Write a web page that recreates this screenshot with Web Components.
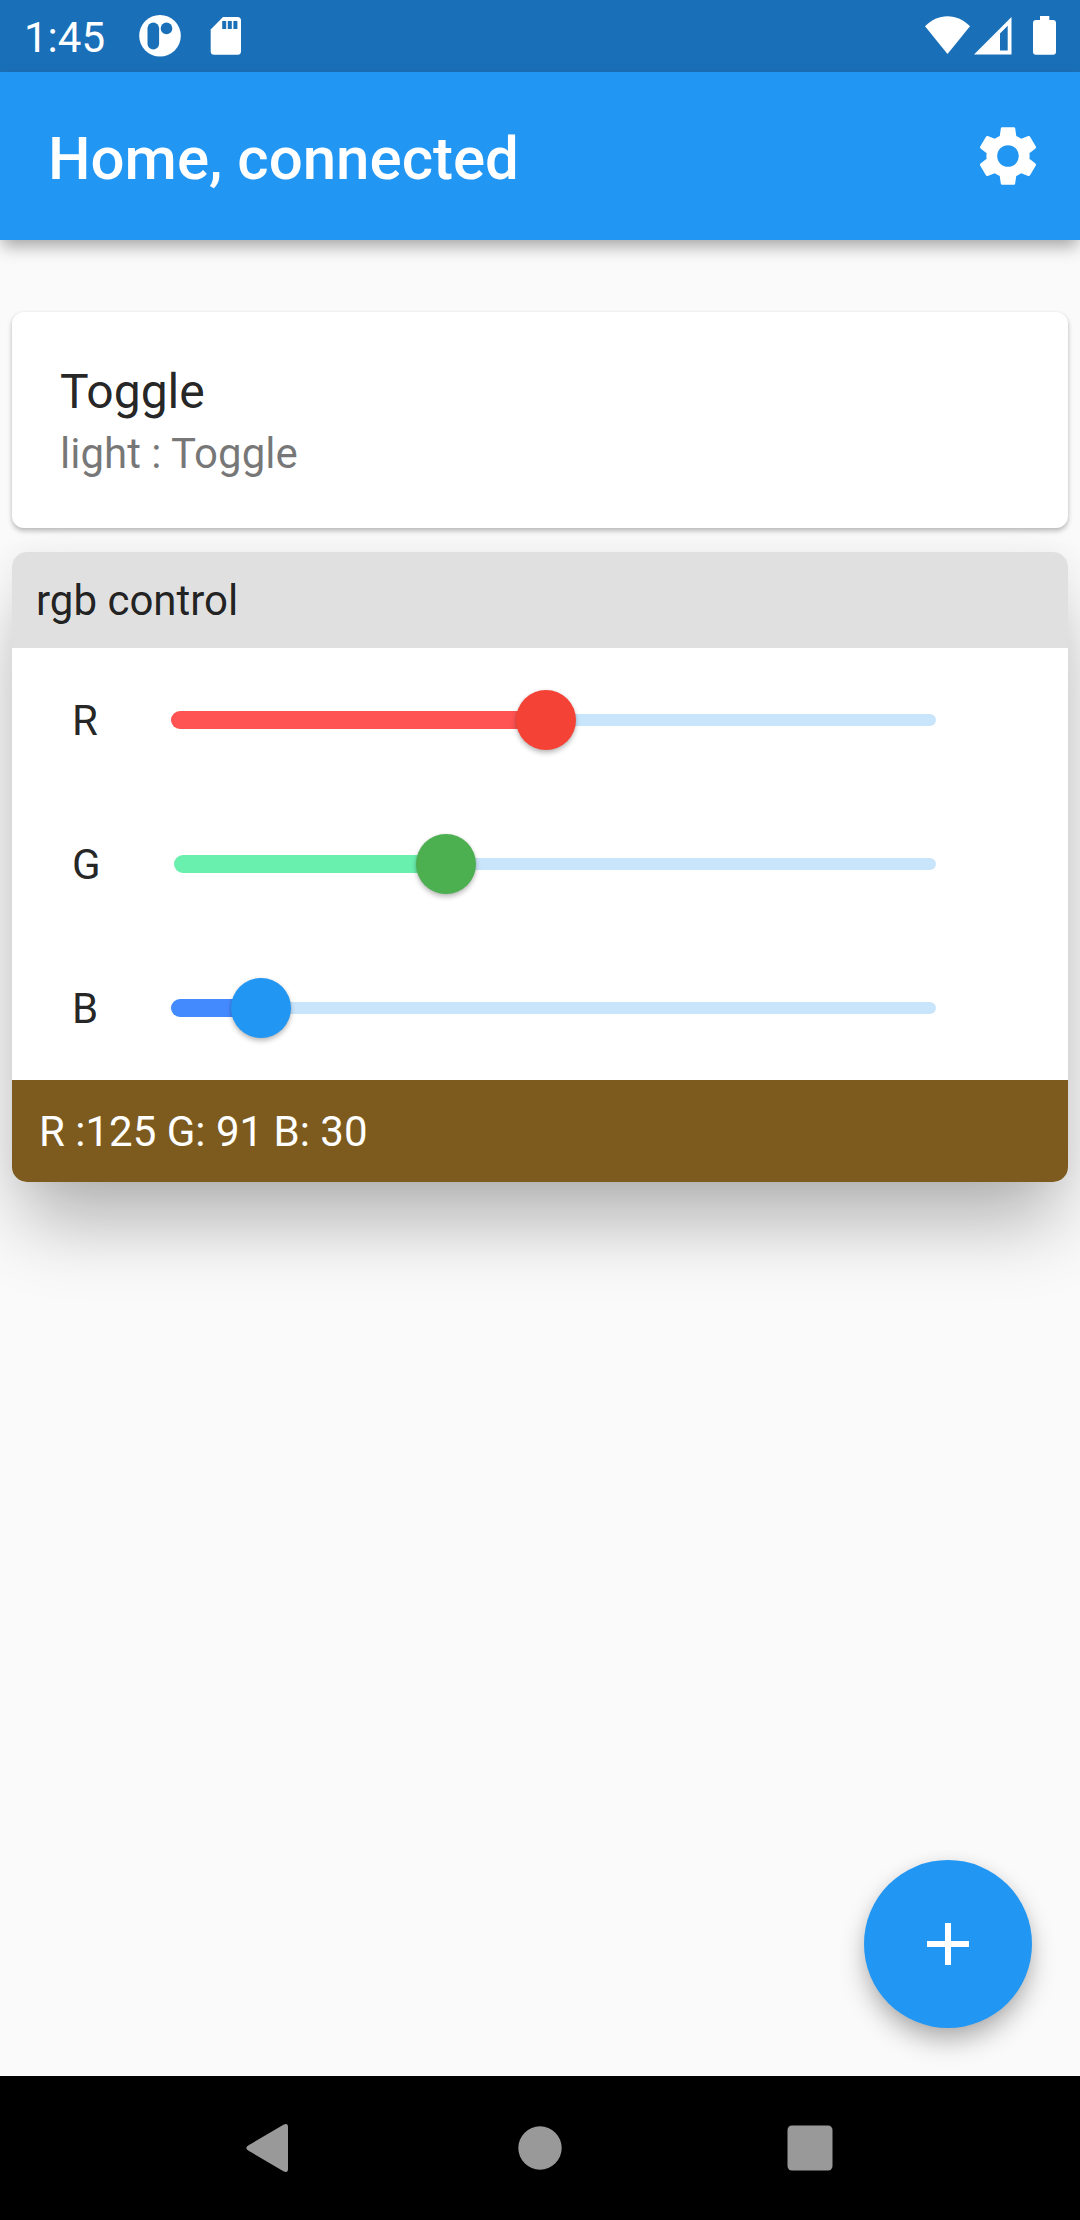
<!DOCTYPE html>
<html lang="en">
<head>
<meta charset="utf-8">
<title>Home</title>
<style>
  html, body { margin: 0; height: 100%; }
  body { font-family: Roboto, "Liberation Sans", sans-serif; color: rgba(0,0,0,.87); }
</style>
</head>
<body>
<phone-screen>
  <status-bar slot="top" time="1:45"></status-bar>
  <app-bar slot="top">Home, connected</app-bar>
  <toggle-card><span slot="title">Toggle</span><span slot="subtitle">light : Toggle</span></toggle-card>
  <rgb-card>
    <span slot="header">rgb control</span>
    <color-slider label="R" start="0" fill="375" track="#ff5252" thumb="#f44336"></color-slider>
    <color-slider label="G" start="3" fill="275" track="#69f0ae" thumb="#4caf50"></color-slider>
    <color-slider label="B" start="0" fill="90" track="#448aff" thumb="#2196f3"></color-slider>
    <span slot="footer">R :125 G: 91 B: 30</span>
  </rgb-card>
  <add-button slot="fab"></add-button>
  <nav-bar slot="bottom"></nav-bar>
</phone-screen>
<script>
const define = (name, html) => customElements.define(name, class extends HTMLElement {
  constructor() {
    super();
    this.attachShadow({ mode: "open" }).innerHTML =
      typeof html === "function" ? html(this) : html;
  }
});

define("phone-screen", `
<style>
  :host { display: flex; flex-direction: column; width: 1080px; height: 2220px; background: #fafafa; overflow: hidden; }
  header { position: relative; z-index: 1; }
  main { flex: 1; display: flex; flex-direction: column; gap: 24px; padding: 72px 12px 0; }
  .fab { margin: auto 36px 48px auto; }
</style>
<header><slot name="top"></slot></header>
<main><slot></slot><div class="fab"><slot name="fab"></slot></div></main>
<slot name="bottom"></slot>`);

define("status-bar", el => `
<style>
  :host { display: flex; align-items: center; justify-content: space-between; height: 72px; box-sizing: border-box; padding: 0 24px; background: #1a70b8; color: #fff; }
  .left { display: flex; align-items: center; }
  .time { font-size: 42px; line-height: 72px; width: 114px; padding-top: 4px; }
  svg { display: block; fill: #fff; }
</style>
<div class="left">
  <div class="time">${el.getAttribute("time")}</div>
  <svg width="120" height="72" viewBox="138 0 120 72">
    <circle cx="160" cy="35.8" r="20.8"/>
    <g fill="#1a70b8"><rect x="147.5" y="22.5" width="11.6" height="27" rx="5.8"/><circle cx="166.5" cy="28.4" r="5.8"/></g>
    <path d="M223 17h14.500q3.500 0 3.500 3.500v30.700q0 3.500-3.500 3.500h-23.300q-3.500 0-3.500-3.500v-21.700z"/>
    <g fill="#1a70b8"><path d="M222.200 21h4v8h-4zM227.800 21h4v8h-4zM233.400 21h4v8h-4z"/></g>
  </svg>
</div>
<svg width="136" height="72" viewBox="920 0 136 72">
  <path d="M947.500 54L925 26.300C931.500 19.900 939 16.300 947.500 16.300S963.500 19.900 970 26.300z"/>
  <path fill-rule="evenodd" d="M974 54.500L1011.500 17v37.500zM1000 33.500v17h7.700V25.800z"/>
  <path d="M1040 16h9.300v4h3.700q3 0 3 3v28.700q0 3-3 3h-17q-3 0-3-3V23q0-3 3-3h4z"/>
</svg>`);

define("app-bar", `
<style>
  :host { display: flex; align-items: center; justify-content: space-between; height: 168px; box-sizing: border-box; padding: 0 36px 0 48px; background: #2196f3; color: #fff; box-shadow: 0 8px 16px -2px rgba(0,0,0,.35); }
  h1 { margin: 0; font-size: 60px; font-weight: 500; line-height: 70px; padding-top: 6px; }
  svg { display: block; fill: #fff; }
</style>
<h1><slot></slot></h1>
<svg width="72" height="72" viewBox="0 0 24 24"><path fill-rule="evenodd" d="M19.140 12.940c.04-.3.06-.61.06-.94 0-.32-.02-.64-.07-.94l2.030-1.580c.18-.14.23-.41.12-.61l-1.920-3.320c-.12-.22-.37-.29-.59-.22l-2.390.96c-.5-.38-1.030-.7-1.620-.94l-.36-2.540c-.04-.24-.24-.41-.48-.41h-3.840c-.24 0-.43.17-.47.41l-.36 2.540c-.59.24-1.130.57-1.620.94l-2.390-.96c-.22-.08-.47 0-.59.22L2.740 8.870c-.12.21-.08.47.12.61l2.030 1.580c-.05.3-.09.63-.09.94s.02.64.07.94l-2.030 1.580c-.18.14-.23.41-.12.61l1.920 3.320c.12.22.37.29.59.22l2.390-.96c.5.38 1.030.7 1.620.94l.36 2.540c.05.24.24.41.48.41h3.840c.24 0 .44-.17.47-.41l.36-2.540c.59-.24 1.130-.56 1.620-.94l2.390.96c.22.08.47 0 .59-.22l1.920-3.320c.12-.22.07-.47-.12-.61zM8.400 12a3.600 3.600 0 1 0 7.200 0a3.600 3.600 0 1 0-7.200 0z"/></svg>`);

define("toggle-card", `
<style>
  :host { display: flex; flex-direction: column; height: 216px; box-sizing: border-box; padding: 52px 48px 0; border-radius: 12px; background: #fff; box-shadow: 0 3px 5px rgba(0,0,0,.25), 0 0 3px rgba(0,0,0,.05); }
  .title { font-size: 48px; line-height: 56px; }
  .sub { font-size: 42px; line-height: 49px; padding-top: 9px; color: rgba(0,0,0,.54); }
</style>
<div class="title"><slot name="title"></slot></div>
<div class="sub"><slot name="subtitle"></slot></div>`);

define("rgb-card", `
<style>
  :host { display: block; border-radius: 15px; background: #fff; font-size: 42px; box-shadow: 0 50px 76px -11px rgba(0,0,0,.29), 0 0 30px rgba(0,0,0,.05); }
  .head, .foot { display: flex; align-items: center; box-sizing: border-box; }
  .head { height: 96px; padding: 0 24px; background: #e0e0e0; border-radius: 15px 15px 0 0; }
  .foot { height: 102px; padding: 0 27px; background: #7d5b1e; color: #fff; border-radius: 0 0 15px 15px; }
</style>
<div class="head"><slot name="header"></slot></div>
<slot></slot>
<div class="foot"><slot name="footer"></slot></div>`);

define("color-slider", el => {
  const a = n => el.getAttribute(n);
  return `
<style>
  :host { display: flex; align-items: center; height: 144px; padding-left: 60px; }
  .label { width: 99px; }
  .rail { display: flex; align-items: center; width: 765px; height: 60px; }
  .active { box-sizing: border-box; width: ${a("fill") - a("start")}px; margin-left: ${a("start")}px; height: 18px; border-radius: 9px 0 0 9px; background: ${a("track")}; }
  .thumb { width: 60px; height: 60px; margin: 0 -30px; border-radius: 50%; background: ${a("thumb")}; z-index: 1; box-shadow: 0 3px 5px rgba(0,0,0,.25), 0 0 3px rgba(0,0,0,.08); }
  .rest { flex: 1; height: 12px; border-radius: 0 6px 6px 0; background: #c9e5fc; }
</style>
<div class="label">${a("label")}</div>
<div class="rail"><div class="active"></div><div class="thumb"></div><div class="rest"></div></div>`;
});

define("add-button", `
<style>
  :host { display: flex; align-items: center; justify-content: center; width: 168px; height: 168px; border-radius: 50%; background: #2196f3; box-shadow: 0 14px 26px -2px rgba(0,0,0,.3), 0 0 14px rgba(0,0,0,.06); }
  svg { display: block; fill: #fff; }
</style>
<svg width="72" height="72" viewBox="0 0 24 24"><path d="M19 13h-6v6h-2v-6H5v-2h6V5h2v6h6z"/></svg>`);

define("nav-bar", `
<style>
  :host { display: flex; justify-content: center; height: 144px; background: #000; position: relative; }
  svg { display: block; width: 270px; height: 144px; fill: #999; }
</style>
<svg viewBox="135 0 270 144"><path d="M249 69L283 49Q288 46.500 288 51V93Q288 97.500 283 95L249 75Q243.500 72 249 69z"/></svg>
<svg viewBox="405 0 270 144"><circle cx="540" cy="72" r="21.700"/></svg>
<svg viewBox="675 0 270 144"><rect x="787.500" y="49.500" width="45" height="45" rx="4.500"/></svg>`);
</script>
</body>
</html>
